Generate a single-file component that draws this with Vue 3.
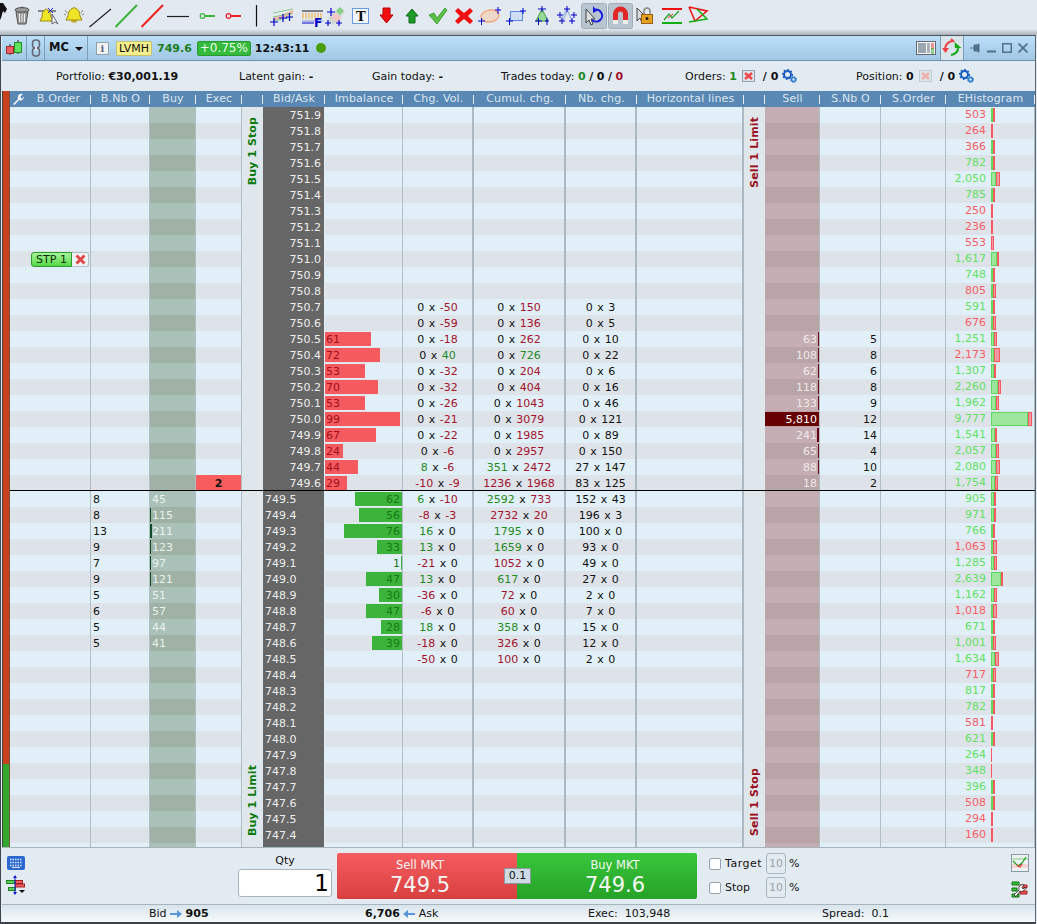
<script setup>
const prices = []
for (let i = 0; i < 46; i++) prices.push((751.9 - i * 0.1).toFixed(1))
prices.push('')

const hist = [
  [503,'r',1,2],[264,'r',0,2],[366,'r',1,2],[782,'g',2,2],['2,050','g',5,4],[785,'g',2,2],[250,'r',0,2],[236,'r',0,2],[553,'r',0,3],['1,617','g',6,2],
  [748,'g',2,2],[805,'r',1,3],[591,'g',1,2],[676,'r',1,3],['1,251','g',3,3],['2,173','r',3,6],['1,307','g',3,2],['2,260','g',7,3],['1,962','g',5,3],['9,777','g',37,4],
  ['1,541','g',4,2],['2,057','g',5,3],['2,080','g',5,4],['1,754','g',4,3],[905,'g',3,2],[971,'g',3,2],[766,'g',2,2],['1,063','r',1,4],['1,285','g',3,3],['2,639','g',10,2],
  ['1,162','g',3,3],['1,018','r',1,4],[671,'g',2,2],['1,001','g',2,3],['1,634','g',4,4],[717,'r',1,3],[817,'g',2,2],[782,'g',2,2],[581,'r',0,2],[621,'g',2,2],
  [264,'g',0,1],[348,'g',0,1],[396,'g',1,2],[508,'r',1,2],[294,'r',0,2],[160,'r',0,2]
]

const changes = [
  ['0','r-50','0','r150','0','3'],['0','r-59','0','r136','0','5'],['0','r-18','0','r262','0','10'],['0','g40','0','g726','0','22'],
  ['0','r-32','0','r204','0','6'],['0','r-32','0','r404','0','16'],['0','r-26','0','r1043','0','46'],['0','r-21','0','r3079','0','121'],
  ['0','r-22','0','r1985','0','89'],['0','r-6','0','r2957','0','150'],['g8','r-6','g351','r2472','27','147'],['r-10','r-9','r1236','r1968','83','125'],
  ['g6','r-10','g2592','r733','152','43'],['r-8','r-3','r2732','r20','196','3'],['g16','0','g1795','0','100','0'],['g13','0','g1659','0','93','0'],
  ['r-21','0','r1052','0','49','0'],['g13','0','g617','0','27','0'],['r-36','0','r72','0','2','0'],['r-6','0','r60','0','7','0'],
  ['g18','0','g358','0','15','0'],['r-18','0','r326','0','12','0'],['r-50','0','r100','0','2','0']
]
const imbRed = [[61,46],[72,55],[53,40],[70,53],[53,40],[99,75],[67,51],[24,18],[44,33],[29,22]]
const imbGreen = [[62,47],[56,43],[76,58],[33,25],[1,1],[47,36],[30,23],[47,36],[28,21],[39,30]]
const sells = [[63,1,5],[108,1,8],[62,1,6],[118,1,8],[133,1,9],['5,810',0,12],[241,2,14],[65,1,4],[88,1,10],[18,0,2]]
const buys = [[45,0,8],[115,1,8],[211,2,13],[123,1,9],[97,1,7],[121,1,9],[51,0,5],[57,0,6],[44,0,5],[41,0,5]]

const side = s => ({ text: s.replace(/^[rg]/, ''), cls: s[0] === 'r' ? 'neg' : s[0] === 'g' ? 'pos' : '' })

const rows = prices.map((price, i) => {
  const ch = changes[i - 12]
  return {
    price, i,
    hist: hist[i],
    ch: ch ? ch.map(side) : null,
    red: imbRed[i - 14],
    green: imbGreen[i - 24],
    sell: sells[i - 14],
    buy: buys[i - 24]
  }
})
const heads = ['B.Order','B.Nb O','Buy','Exec','','Bid/Ask','Imbalance','Chg. Vol.','Cumul. chg.','Nb. chg.','Horizontal lines','','Sell','S.Nb O','S.Order','EHistogram']
</script>

<template>
  <div class="root">
    <div class="toolbar">
      <svg width="720" height="33" viewBox="0 0 720 33">
        <path d="M0 3 3 3 7 9 5 13 3 11 1 18 0 20Z" fill="#111"/>
        <g stroke="#555" fill="#999">
          <ellipse cx="22" cy="10" rx="7" ry="2.5"/>
          <path d="M16 12 18 24H26L28 12Z"/>
          <path d="M19.500 14V22M22 14V22M24.500 14V22" stroke="#eee"/>
          <path d="M20 8Q22 6 24 8" fill="none"/>
        </g>
        <path d="M38 11H56" stroke="#222"/>
        <path d="M45 10Q45 9 46 9 47 9 47 10 51 11 51 17L53 21H40L42 17Q42 11 45 10Z" fill="#f0e428" stroke="#9a8a10"/>
        <path d="M48 8 53 13M53 8 48 13" stroke="#22c" stroke-width="1"/>
        <path d="M52 14V24L55 22 58 24Z" fill="#eee" stroke="#667"/>
        <path d="M74 8Q75 7 75 8 80 10 80 16L82 20H66L68 16Q68 10 73 8Z" fill="#f0e428" stroke="#9a8a10"/>
        <ellipse cx="74" cy="21" rx="3" ry="1.500" fill="#b8a818"/>
        <path d="M65 10 67 13M64 14 66 15M83 10 81 13M84 14 82 15" stroke="#888"/>
        <path d="M89.500 27 111 9" stroke="#222" stroke-width="1.200"/>
        <path d="M115.500 27 137 5" stroke="#3cb43c" stroke-width="2"/>
        <path d="M141.500 27 163 5" stroke="#f02020" stroke-width="2"/>
        <path d="M167 16.500H189" stroke="#222" stroke-width="1.200"/>
        <circle cx="202.500" cy="16" r="2.300" fill="none" stroke="#3cb43c" stroke-width="1.200"/><path d="M205 16H215" stroke="#3cb43c" stroke-width="2"/>
        <circle cx="228.500" cy="16" r="2.300" fill="none" stroke="#f02020" stroke-width="1.200"/><path d="M231 16H241" stroke="#f02020" stroke-width="2"/>
        <path d="M256.500 5V26.500" stroke="#111" stroke-width="1.200"/>

        <path d="M273 18 293 10V14L273 22Z" fill="#f4b8a8"/><path d="M273 13 293 9M273 17 293 13M273 21 293 17" stroke="#88c888"/>
        <path d="M270 22H278M274 18V26M279 18H287M283 14V22M286 17H293M289.500 13V21" stroke="#00c" stroke-width="1.200"/>
        <path d="M302 11H323" stroke="#111"/><path d="M302 14H323M302 16H323" stroke="#f4a030" stroke-dasharray="2 1"/><path d="M302 18H323" stroke="#e0c040" stroke-dasharray="2 1"/><path d="M302 21H323" stroke="#8090d0"/>
        <text x="314" y="26.500" class="svgf">F</text><path d="M302 23H314" stroke="#00c"/>
        <path d="M328 18 340 7 345 12 333 25Z" fill="#cfd8cf"/><path d="M336 11 340 7 344 11 340 15Z" fill="#88d088"/><path d="M331 17 336 13 342 18 337 23Z" fill="#f0c8c8"/>
        <path d="M327 12H335M331 8V16M325 23H331M328 20V26M336 23H342M339 20V26" stroke="#00c" stroke-width="1.200"/>
        <rect x="352.500" y="8.500" width="16" height="15" fill="#f2f5fa" stroke="#6a9ae0"/><text x="356" y="20.500" class="svgt">T</text>
        <path d="M383 8H390V15H393L386.500 23 380 15H383Z" fill="#f01010" stroke="#b00"/>
        <path d="M412 9 418 16H415V23H409V16H406Z" fill="#1e9a28" stroke="#0c6a14"/>
        <path d="M429 15 434 13 437 18 445 8 447 10 437 24Z" fill="#58c048" stroke="#48a038"/>
        <path d="M455 11 458 8 464 13 470 8 473 11 468 16 473 21 470 24 464 19 458 24 455 21 460 16Z" fill="#f01010"/>
        <ellipse cx="490" cy="16" rx="9" ry="6" fill="#eed8c8" stroke="#f4a070" stroke-width="1.200" transform="rotate(-8 490 16)"/>
        <path d="M478 21H485M481.500 18V25M495 10H501M498 7V14" stroke="#00c"/>
        <rect x="510.500" y="11.500" width="12" height="9" fill="#d0dcf4" stroke="#5a88e0"/>
        <path d="M506 21H513M509.500 18V25M520 11H526M523 8V14" stroke="#00c"/>
        <path d="M542 9 548 21H536Z" fill="#98d898" stroke="#38a038"/>
        <path d="M535 21H542M538.500 18V25M545 21H549M547 18V25M538 9H546M542 6V12" stroke="#00c"/>
        <path d="M560 21 567 9 572 21M563 21 567 12" fill="none" stroke="#80a0e0"/>
        <path d="M557 15H563M560 12V18M564 9H570M567 6V12M571 15H577M574 12V18M559 21H565M562 18V24M569 21H575M572 18V24" stroke="#00c"/>

        <rect x="581.500" y="3.500" width="25" height="25" rx="2" fill="#b8c5d0" stroke="#a0aeb8"/>
        <path d="M586 9V23L589 20 591 25 593 24 591 19H595Z" fill="#ddd" stroke="#444"/>
        <path d="M594 10A6 6 0 1 1 592 20" fill="none" stroke="#1418e0" stroke-width="2"/><path d="M593 6V13L597 11Z" fill="#1418e0"/>
        <rect x="608.500" y="3.500" width="24" height="25" rx="2" fill="#b8c5d0" stroke="#a0aeb8"/>
        <path d="M613 24V14A7.500 7.500 0 0 1 628 14V24H623V14A2.500 2.500 0 0 0 618 14V24Z" fill="#e02828"/>
        <path d="M613 20H618V24H613ZM623 20H628V24H623Z" fill="#eee"/>
        <path d="M637 8V21L640 18 642 23 644 22 642 17H646Z" fill="#ddd" stroke="#444"/>
        <path d="M644 14V11A3 3 0 0 1 650 11V14" fill="none" stroke="#888" stroke-width="1.500"/><rect x="641.500" y="14.500" width="11" height="9" fill="#e8a020" stroke="#986010"/><circle cx="647" cy="18.500" r="1.500" fill="#222"/>
        <path d="M662 9H682" stroke="#f01010" stroke-width="2"/><path d="M662 23H682" stroke="#10b010" stroke-width="2"/>
        <path d="M664 20 669 14 672 18 679 11" fill="none" stroke="#20a020" stroke-width="1.200"/><path d="M668 18 673 14" stroke="#e03030"/>
        <path d="M689 7 707 11 695 21 689 7" fill="none" stroke="#f01010" stroke-width="1.500"/><path d="M689 22 707 19 697 9" fill="none" stroke="#10b010" stroke-width="1.500"/>
      </svg>
    </div>

    <div class="window">
      <div class="title">
        <div class="tcell c1">
          <svg width="16" height="20" viewBox="0 0 16 20"><path d="M4 6V17M12 2V16" stroke="#222"/><rect x="0.500" y="8.500" width="7" height="7" fill="#f06060" stroke="#a03030"/><rect x="8.500" y="4.500" width="7" height="10" fill="#60e060" stroke="#209020"/></svg>
        </div>
        <div class="tcell c2">
          <svg width="10" height="18" viewBox="0 0 10 18"><rect x="1.500" y="1" width="7" height="8" rx="3" fill="none" stroke="#667" stroke-width="1.500"/><rect x="1.500" y="9" width="7" height="8" rx="3" fill="none" stroke="#667" stroke-width="1.500"/><path d="M5 6V12" stroke="#dde" stroke-width="2"/></svg>
        </div>
        <div class="tcell c3"><b>MC</b><i class="caret"></i></div>
        <div class="infoic">i</div>
        <div class="lvmh">LVMH</div>
        <b class="lastp">749.6</b>
        <div class="pct">+0.75%</div>
        <b class="clock">12:43:11</b>
        <i class="dot"></i>
        <div class="tright">
          <svg width="20" height="14" viewBox="0 0 20 14"><rect x="0.500" y="0.500" width="19" height="13" fill="#f6f6f6" stroke="#667"/><rect x="2" y="2" width="8" height="10" fill="#9aa6b0"/><rect x="11" y="2" width="3" height="10" fill="#a8b0b8"/><path d="M15 3H18M15 5H18M15 7H18" stroke="#e03030"/><path d="M15 8H18M15 10H18M15 12H18" stroke="#20a020"/></svg>
          <div class="sync">
            <svg width="20" height="20" viewBox="0 0 20 20"><path d="M3 12Q3 4 11 3L9 1" fill="none" stroke="#f04040" stroke-width="2"/><path d="M0 10H7L3.500 15Z" fill="#f04040"/><path d="M16 8Q17 16 9 17" fill="none" stroke="#18a818" stroke-width="2"/><path d="M12.500 4 19.500 10H13Z" fill="#18a818"/></svg>
          </div>
          <svg width="10" height="10" viewBox="0 0 10 10" class="w"><path d="M0 5H4M4 2H8V1H9V9H8V8H4Z" fill="#527086" stroke="#527086"/></svg>
          <svg width="9" height="10" viewBox="0 0 9 10" class="w w7"><path d="M0 8.500H9" stroke="#527086" stroke-width="2"/></svg>
          <svg width="10" height="10" viewBox="0 0 10 10" class="w"><rect x="0.750" y="0.750" width="8.500" height="8.500" fill="none" stroke="#527086" stroke-width="1.500"/></svg>
          <svg width="10" height="10" viewBox="0 0 10 10" class="w"><path d="M0.500 0.500 9.500 9.500M9.500 0.500 0.500 9.500" stroke="#527086" stroke-width="1.700"/></svg>
        </div>
      </div>

      <div class="info">
        <div>Portfolio: <b>€30,001.19</b></div>
        <div>Latent gain: <b>-</b></div>
        <div>Gain today: <b>-</b></div>
        <div>Trades today: <b class="pos">0</b> <b>/</b> <b>0</b> <b>/</b> <b class="neg">0</b></div>
        <div class="inl">Orders:&nbsp;<b class="pos">1</b>
          <svg class="xdoc" width="13" height="12" viewBox="0 0 13 12"><rect x="0.500" y="0.500" width="12" height="11" fill="#dce4ea" stroke="#90a0ae"/><path d="M3 3 10 9M10 3 3 9" stroke="#f04848" stroke-width="2.500"/></svg>
          <b class="sl">/ 0</b>
          <svg class="gears" width="15" height="14" viewBox="0 0 15 14"><circle cx="5.500" cy="5.500" r="3.500" fill="none" stroke="#1a5ec0" stroke-width="2"/><circle cx="5.500" cy="5.500" r="4.800" fill="none" stroke="#1a5ec0" stroke-width="1.500" stroke-dasharray="1.800 1.800"/><circle cx="11.500" cy="10.500" r="2" fill="none" stroke="#2a7ed0" stroke-width="1.500"/><circle cx="11.500" cy="10.500" r="3" fill="none" stroke="#2a7ed0" stroke-dasharray="1.200 1.200"/></svg>
        </div>
        <div class="inl">Position:&nbsp;<b>0</b>
          <svg class="xdoc" width="13" height="12" viewBox="0 0 13 12"><rect x="0.500" y="0.500" width="12" height="11" fill="#dce4ea" stroke="#c0ccd4"/><path d="M3 3 10 9M10 3 3 9" stroke="#f0b0b0" stroke-width="2.500"/></svg>
          <b class="sl">/ 0</b>
          <svg class="gears" width="15" height="14" viewBox="0 0 15 14"><circle cx="5.500" cy="5.500" r="3.500" fill="none" stroke="#1a5ec0" stroke-width="2"/><circle cx="5.500" cy="5.500" r="4.800" fill="none" stroke="#1a5ec0" stroke-width="1.500" stroke-dasharray="1.800 1.800"/><circle cx="11.500" cy="10.500" r="2" fill="none" stroke="#2a7ed0" stroke-width="1.500"/><circle cx="11.500" cy="10.500" r="3" fill="none" stroke="#2a7ed0" stroke-dasharray="1.200 1.200"/></svg>
        </div>
      </div>

      <div class="main">
        <div class="leftbar"><div class="lb-red"></div><div class="lb-green"></div></div>
        <div class="ladder">
          <div class="grid head">
            <div v-for="(h, k) in heads" :key="k" class="hc" :class="{ first: k === 0 }">
              <svg v-if="k === 0" class="wrench" width="12" height="12" viewBox="0 0 12 12"><path d="M1 11 6 6Q5 2 8 1 10 0.500 11 1L8.500 3.500 9 5 10.500 5.500 12 3Q12 6 10 7 8 8 7 7L2.500 12Z" fill="#f0f4f8"/></svg>
              {{ h }}
            </div>
          </div>
          <div class="body">
            <div v-for="r in rows" :key="r.i" class="grid row" :class="{ alt: r.i % 2, split: r.i === 23 }">
              <div class="c order">
                <template v-if="r.i === 9">
                  <span class="stp">STP 1</span>
                  <span class="stpx"><svg width="11" height="11" viewBox="0 0 11 11"><path d="M1.500 1.500 9.500 9.500M9.500 1.500 1.500 9.500" stroke="#e04848" stroke-width="3"/></svg></span>
                </template>
              </div>
              <div class="c nb">{{ r.buy ? r.buy[2] : '' }}</div>
              <div class="c buy" :style="r.buy && r.buy[1] ? { backgroundSize: r.buy[1] + 'px 14px, auto' } : null">{{ r.buy ? r.buy[0] : '' }}</div>
              <div class="c exec"><span v-if="r.i === 23" class="execv">2</span></div>
              <div class="c lane"></div>
              <div class="c price" :class="{ low: r.i > 23 }">{{ r.price }}</div>
              <div class="c imb" :class="{ ir: r.red, ig: r.green }" :style="r.red ? { backgroundSize: r.red[1] + 'px 14px' } : r.green ? { backgroundSize: r.green[1] + 'px 14px' } : null">{{ r.red ? r.red[0] : r.green ? r.green[0] : '' }}</div>
              <template v-if="r.ch">
                <div class="c mid thick"><span :class="r.ch[0].cls">{{ r.ch[0].text }}</span> x <span :class="r.ch[1].cls">{{ r.ch[1].text }}</span></div>
                <div class="c mid thick"><span :class="r.ch[2].cls">{{ r.ch[2].text }}</span> x <span :class="r.ch[3].cls">{{ r.ch[3].text }}</span></div>
                <div class="c mid thick">{{ r.ch[4].text }} x {{ r.ch[5].text }}</div>
              </template>
              <template v-else>
                <div class="c thick"></div><div class="c thick"></div><div class="c thick"></div>
              </template>
              <div class="c thick"></div>
              <div class="c lane"></div>
              <div class="c sell" :class="{ huge: r.sell && r.sell[0] === '5,810' }" :style="r.sell && r.sell[1] ? { backgroundSize: r.sell[1] + 'px 14px, auto' } : null">{{ r.sell ? r.sell[0] : '' }}</div>
              <div class="c snb">{{ r.sell ? r.sell[2] : '' }}</div>
              <div class="c"></div>
              <div class="c ehist">
                <template v-if="r.hist">
                  <span class="hv" :class="r.hist[1]">{{ r.hist[0] }}</span>
                  <span class="hb">
                    <i v-if="r.hist[2]" class="hg" :style="{ width: r.hist[2] + 'px' }"></i>
                    <i class="hr" :class="{ open: r.hist[3] > 2 }" :style="{ width: r.hist[3] + 'px' }"></i>
                  </span>
                </template>
              </div>
            </div>
            <div class="vlane vbuy"><span class="vt">Buy 1 Stop</span><span class="vt">Buy 1 Limit</span></div>
            <div class="vlane vsell"><span class="vt">Sell 1 Limit</span><span class="vt">Sell 1 Stop</span></div>
          </div>
        </div>
      </div>

      <div class="controls">
        <div class="licons">
          <svg width="18" height="14" viewBox="0 0 18 14"><rect width="18" height="14" rx="2" fill="#2a68d0"/><path d="M3 3.500H15M3 6.500H15M3 9.500H15" stroke="#dbe8fa" stroke-dasharray="1.500 1" stroke-width="1.500"/><path d="M5 11.500H13" stroke="#dbe8fa"/></svg>
          <svg width="19" height="20" viewBox="0 0 19 20"><rect x="0.500" y="5.500" width="8" height="3" fill="#58d058" stroke="#208020"/><rect x="2.500" y="12.500" width="7" height="3" fill="#58d058" stroke="#208020"/><rect x="9.500" y="5.500" width="7" height="3" fill="#f06060" stroke="#a02020"/><rect x="9.500" y="9" width="9" height="3" fill="#f06060" stroke="#a02020"/><path d="M9 1V19" stroke="#1020d0"/><path d="M9 0 11 3H7ZM9 20 11 17H7Z" fill="#1020d0"/><path d="M13 15H19L16 18Z" fill="#111"/></svg>
        </div>
        <div class="qtywrap">
          <div class="qlabel">Qty</div>
          <div class="qty">1</div>
        </div>
        <div class="trade">
          <div class="tbtn sellb"><span class="tl">Sell MKT</span><span class="tp">749.5</span></div>
          <div class="tbtn buyb"><span class="tl">Buy MKT</span><span class="tp">749.6</span></div>
          <div class="spread">0.1</div>
        </div>
        <div class="opts">
          <i class="cb"></i><span class="tg">Target</span><span class="pbox">10</span><span>%</span>
          <i class="cb"></i><span>Stop</span><span class="pbox">10</span><span>%</span>
        </div>
        <div class="ricons">
          <svg width="18" height="18" viewBox="0 0 18 18"><rect x="0.500" y="0.500" width="17" height="17" fill="#eef2f4" stroke="#8a9aa6"/><rect x="1" y="10" width="16" height="4" fill="#f8d4d4"/><path d="M1 5H17" stroke="#b4e4b4" stroke-width="2"/><path d="M2 7 7 12 11 9 15 3" fill="none" stroke="#18a018" stroke-width="1.200"/><path d="M6 11 9 13 11 10" fill="none" stroke="#e03030" stroke-width="1.200"/></svg>
          <svg width="17" height="17" viewBox="0 0 17 17"><path d="M1 1H8V4H1ZM1 7H6V10H1ZM1 13H8V16H1Z" fill="#38c038" stroke="#107010"/><path d="M9 4H16V7H9ZM9 10H16V13H9Z" fill="#f05050" stroke="#a02020"/><path d="M3 14 8 9Q7 5 10 4 12 3.500 13 4L11 6.500 12 8 14 6Q15 9 12 10 10 11 9 10L5 15.500Z" fill="#fff" stroke="#111" stroke-width=".7"/></svg>
        </div>
      </div>

      <div class="status">
        <div class="inl">Bid&nbsp;<svg width="12" height="8" viewBox="0 0 12 8" class="arr"><path d="M0 3H7V0L12 4 7 8V5H0Z" fill="#5a96d8"/></svg>&nbsp;<b>905</b></div>
        <div class="inl"><b>6,706</b>&nbsp;<svg width="12" height="8" viewBox="0 0 12 8" class="arr"><path d="M12 3H5V0L0 4 5 8V5H12Z" fill="#5a96d8"/></svg>&nbsp;Ask</div>
        <div>Exec:&nbsp; 103,948</div>
        <div>Spread:&nbsp; 0.1</div>
      </div>
    </div>
  </div>
</template>

<style>
html, body { margin: 0; background: #e3e9f1; }
</style>

<style scoped>
.root { width: 1037px; height: 924px; display: flex; flex-direction: column; overflow: hidden; background: #e3e9f1; font: 11px/1 "DejaVu Sans", sans-serif; color: #111; }
.toolbar { height: 35px; flex: none; background: linear-gradient(#e3e9f1 0, #e3e9f1 29px, #a9b0b8 35px); }
.toolbar svg { display: block; }
.svgf { font: bold 12px "DejaVu Sans", sans-serif; fill: #00c; }
.svgt { font: bold 13px "DejaVu Serif", serif; fill: #111; }
.window { flex: 1; min-height: 0; width: 1036px; box-sizing: border-box; display: flex; flex-direction: column; border-top: 1px solid #4c565f; border-left: 1px solid #3e464e; border-right: 1px solid #5c6770; border-bottom: 2px solid #3c4248; padding-left: 1px; background: #e3ebf2; }

.title { height: 25px; flex: none; box-sizing: border-box; display: flex; align-items: center; background: linear-gradient(#bce0fa, #a0c6e2); border-bottom: 1px solid #6d93b0; }
.tcell { height: 24px; box-sizing: border-box; display: flex; align-items: center; justify-content: center; border-right: 1px solid #7c9fb9; }
.c1 { width: 25px; } .c2 { width: 18px; } .c3 { width: 43px; font-size: 11.5px; gap: 6px; }
.caret { width: 0; height: 0; border: 4px solid transparent; border-top: 4px solid #111; border-bottom: 0; margin-top: 2px; }
.infoic { width: 11px; height: 11px; margin-left: 8px; background: #eef2f4; border: 1px solid #93a0aa; color: #667; font: bold 10px/11px "DejaVu Serif", serif; text-align: center; }
.lvmh { margin-left: 7px; width: 36px; height: 15px; line-height: 14px; box-sizing: border-box; text-align: center; background: #f6f08c; border: 1px solid #c4bf6c; border-radius: 2px; }
.lastp { margin-left: 5px; color: #1c7d1c; }
.pct { margin-left: 5px; width: 54px; height: 15px; text-align: center; box-sizing: border-box; background: #34ba3c; color: #e8fbe8; border-radius: 2px; font-size: 12px; border: 1px solid #2a9a30; line-height: 13px; }
.clock { margin-left: 4px; }
.dot { width: 10px; height: 10px; border-radius: 50%; background: #4c9c0a; margin-left: 6px; }
.tright { margin-left: auto; display: flex; align-items: center; height: 24px; padding-right: 7px; }
.sync { width: 24px; height: 24px; flex: none; box-sizing: border-box; display: flex; align-items: center; justify-content: center; background: #d8e6ec; border-left: 1px solid #7c9fb9; border-right: 1px solid #7c9fb9; margin-left: 4px; }
.w { margin-left: 6px; flex: none; }
.w7 { margin-left: 7px; }

.info { height: 30px; flex: none; display: grid; grid-template-columns: 183px 133px 129px 184px 171px auto; padding-left: 54px; align-items: center; }
.inl { display: flex; align-items: center; white-space: pre; }
.xdoc { margin-left: 5px; }
.sl { margin-left: 8px; }
.gears { margin-left: 4px; }
b.pos, .pos { color: #1f8a1f; }
b.neg, .neg { color: #a5102a; }

.main { flex: 1; display: flex; min-height: 0; }
.leftbar { width: 8px; flex: none; display: flex; flex-direction: column; box-sizing: border-box; border-left: 1px solid #444; border-right: 1px solid #7a5040; }
.lb-red { flex: 1; background: #c8401c; }
.lb-green { height: 83px; background: #34a82c; }
.ladder { width: 1025px; min-height: 0; display: flex; flex-direction: column; }
.grid { display: grid; grid-template-columns: 81px 59px 46px 46px 21px 62px 78px 71px 92px 71px 107px 21px 55px 61px 65px 89px; grid-template-rows: minmax(0, 1fr); }
.head { height: 16px; flex: none; background: #5a88b4; color: #dbe6f0; line-height: 16px; }
.hc { position: relative; text-align: center; white-space: nowrap; letter-spacing: .15px; }
.hc.first { padding-left: 16px; box-sizing: border-box; }
.hc::after { content: ""; position: absolute; right: 0; top: 4px; height: 9px; width: 1px; background: #e4edf5; }
.wrench { position: absolute; left: 2px; top: 2px; }
.body { position: relative; flex: 1; min-height: 0; overflow: hidden; }
.row { height: 16px; background: #e1f0f8; box-sizing: border-box; }
.row.alt { background: #dde3e9; }
.row.split { border-bottom: 1px solid #000; }
.c { box-sizing: border-box; border-right: 1px solid #b0bec6; line-height: 18px; white-space: nowrap; min-width: 0; min-height: 0; }
.thick { border-right: 2px solid #adb9c2; }
.mid { text-align: center; word-spacing: 1px; }
.order { display: flex; align-items: center; padding-left: 21px; }
.stp { width: 41px; height: 15px; box-sizing: border-box; background: linear-gradient(#a6f49a, #56d846); border: 1px solid #2c9a2c; border-radius: 3px 0 0 3px; line-height: 14px; text-align: center; color: #083008; }
.stpx { width: 17px; height: 15px; box-sizing: border-box; background: #eef2f4; border: 1px solid #b4c0c8; border-left: 0; border-radius: 0 3px 3px 0; display: flex; align-items: center; justify-content: center; }
.nb { padding-left: 2px; }
.buy { background: linear-gradient(#0f4a2a, #0f4a2a) left center no-repeat, #a9c1b8; background-size: 0 14px, auto; color: #eaf2ee; padding-left: 2px; }
.row.alt .buy { background-color: #a0b1a6; }
.execv { display: block; height: 15px; background: #f85c5c; text-align: center; font-weight: bold; line-height: 17px; }
.lane { background: #dfe7ed; border-right: 0; }
.price { background: #666; color: #eee; text-align: right; padding-right: 3px; border-right: 1px solid #e1f0f8; }
.price.low { text-align: left; padding-left: 2px; }
.imb { padding: 0 2px 0 1px; background-repeat: no-repeat; }
.ir { background-image: linear-gradient(#f45a5e, #f45a5e); background-position: left center; color: #a01018; }
.ig { background-image: linear-gradient(#3cb43c, #3cb43c); background-position: right center; color: #187818; text-align: right; }
.sell { background: linear-gradient(#660010, #660010) right center no-repeat, #c4aeb3; background-size: 0 14px, auto; color: #f0e8ea; text-align: right; padding-right: 2px; }
.row.alt .sell { background-color: #b9a5a8; }
.sell.huge, .row.alt .sell.huge { background: linear-gradient(#660000, #660000) center no-repeat, #b9a5a8; background-size: 100% 14px; color: #fff; }
.snb { text-align: right; padding-right: 3px; }
.ehist { display: flex; align-items: center; }
.hv { width: 40px; text-align: right; flex: none; }
.hv.g { color: #62e062; } .hv.r { color: #f85c64; }
.hb { display: flex; height: 14px; margin-left: 5px; }
.hb i { display: block; box-sizing: border-box; height: 14px; }
.hg { background: #9ee69e; border: 1px solid #5cdc5c; }
.hr { background: #f85860; }
.hr.open { background: #f098a0; border: 1px solid #f85860; }

.vlane { position: absolute; top: 0; bottom: 0; width: 21px; display: flex; flex-direction: column; justify-content: space-between; align-items: center; padding: 10px 0 11px; box-sizing: border-box; pointer-events: none; }
.vbuy { left: 232px; color: #0c7a0c; }
.vsell { left: 734px; color: #9a1020; }
.vt { writing-mode: vertical-rl; transform: rotate(180deg); font-weight: bold; letter-spacing: .1px; }

.controls { height: 57px; flex: none; box-sizing: border-box; border-top: 1px solid #a8b4bc; display: flex; align-items: flex-start; padding-left: 4px; }
.licons { width: 19px; padding-top: 8px; display: flex; flex-direction: column; gap: 5px; }
.licons svg, .ricons svg { display: block; }
.licons svg:first-child { margin-left: 1px; }
.qtywrap { margin-left: 213px; width: 94px; padding-top: 7px; text-align: center; }
.qlabel { height: 14px; line-height: 12px; }
.qty { height: 28px; box-sizing: border-box; border: 1px solid #a8b4bc; border-radius: 3px; background: #fff; text-align: right; padding-right: 2px; font-size: 23px; line-height: 27px; color: #000; }
.trade { position: relative; display: flex; margin-left: 5px; margin-top: 5px; width: 360px; height: 46px; }
.tbtn { flex: 0 0 180px; display: flex; flex-direction: column; align-items: center; padding-top: 5px; color: #f4f8f4; box-sizing: border-box; }
.sellb { background: linear-gradient(#f45c60, #d84040); border-radius: 2px 0 0 2px; padding-right: 14px; }
.buyb { background: linear-gradient(#38c63c, #26a226); border-radius: 0 2px 2px 0; padding-left: 16px; }
.tl { font-size: 11.5px; line-height: 14px; }
.tp { font-size: 21px; line-height: 26px; }
.spread { position: absolute; left: 167px; top: 15px; width: 27px; height: 16px; box-sizing: border-box; background: #cfdbe4; border: 1px solid #8d979e; line-height: 14px; text-align: center; }
.opts { margin-left: 12px; margin-top: 5px; display: grid; grid-template-columns: 16px 41px 23px auto; grid-auto-rows: 21px; row-gap: 3px; align-items: center; }
.tg { letter-spacing: .5px; }
.cb { width: 12px; height: 12px; box-sizing: border-box; display: block; background: #fff; border: 1px solid #97a4ae; border-radius: 2px; }
.pbox { width: 20px; height: 21px; box-sizing: border-box; border: 1px solid #aab6be; border-radius: 3px; color: #9aa4aa; text-align: center; line-height: 19px; }
.ricons { margin-left: auto; margin-right: 6px; padding-top: 6px; display: flex; flex-direction: column; gap: 9px; }

.status { height: 18px; flex: none; box-sizing: border-box; border-top: 1px solid #a8b4bc; background: linear-gradient(#d8e4ec, #f6fafc); display: grid; grid-template-columns: 216px 223px 234px auto; padding-left: 147px; align-items: center; }
.arr { display: block; }
</style>
